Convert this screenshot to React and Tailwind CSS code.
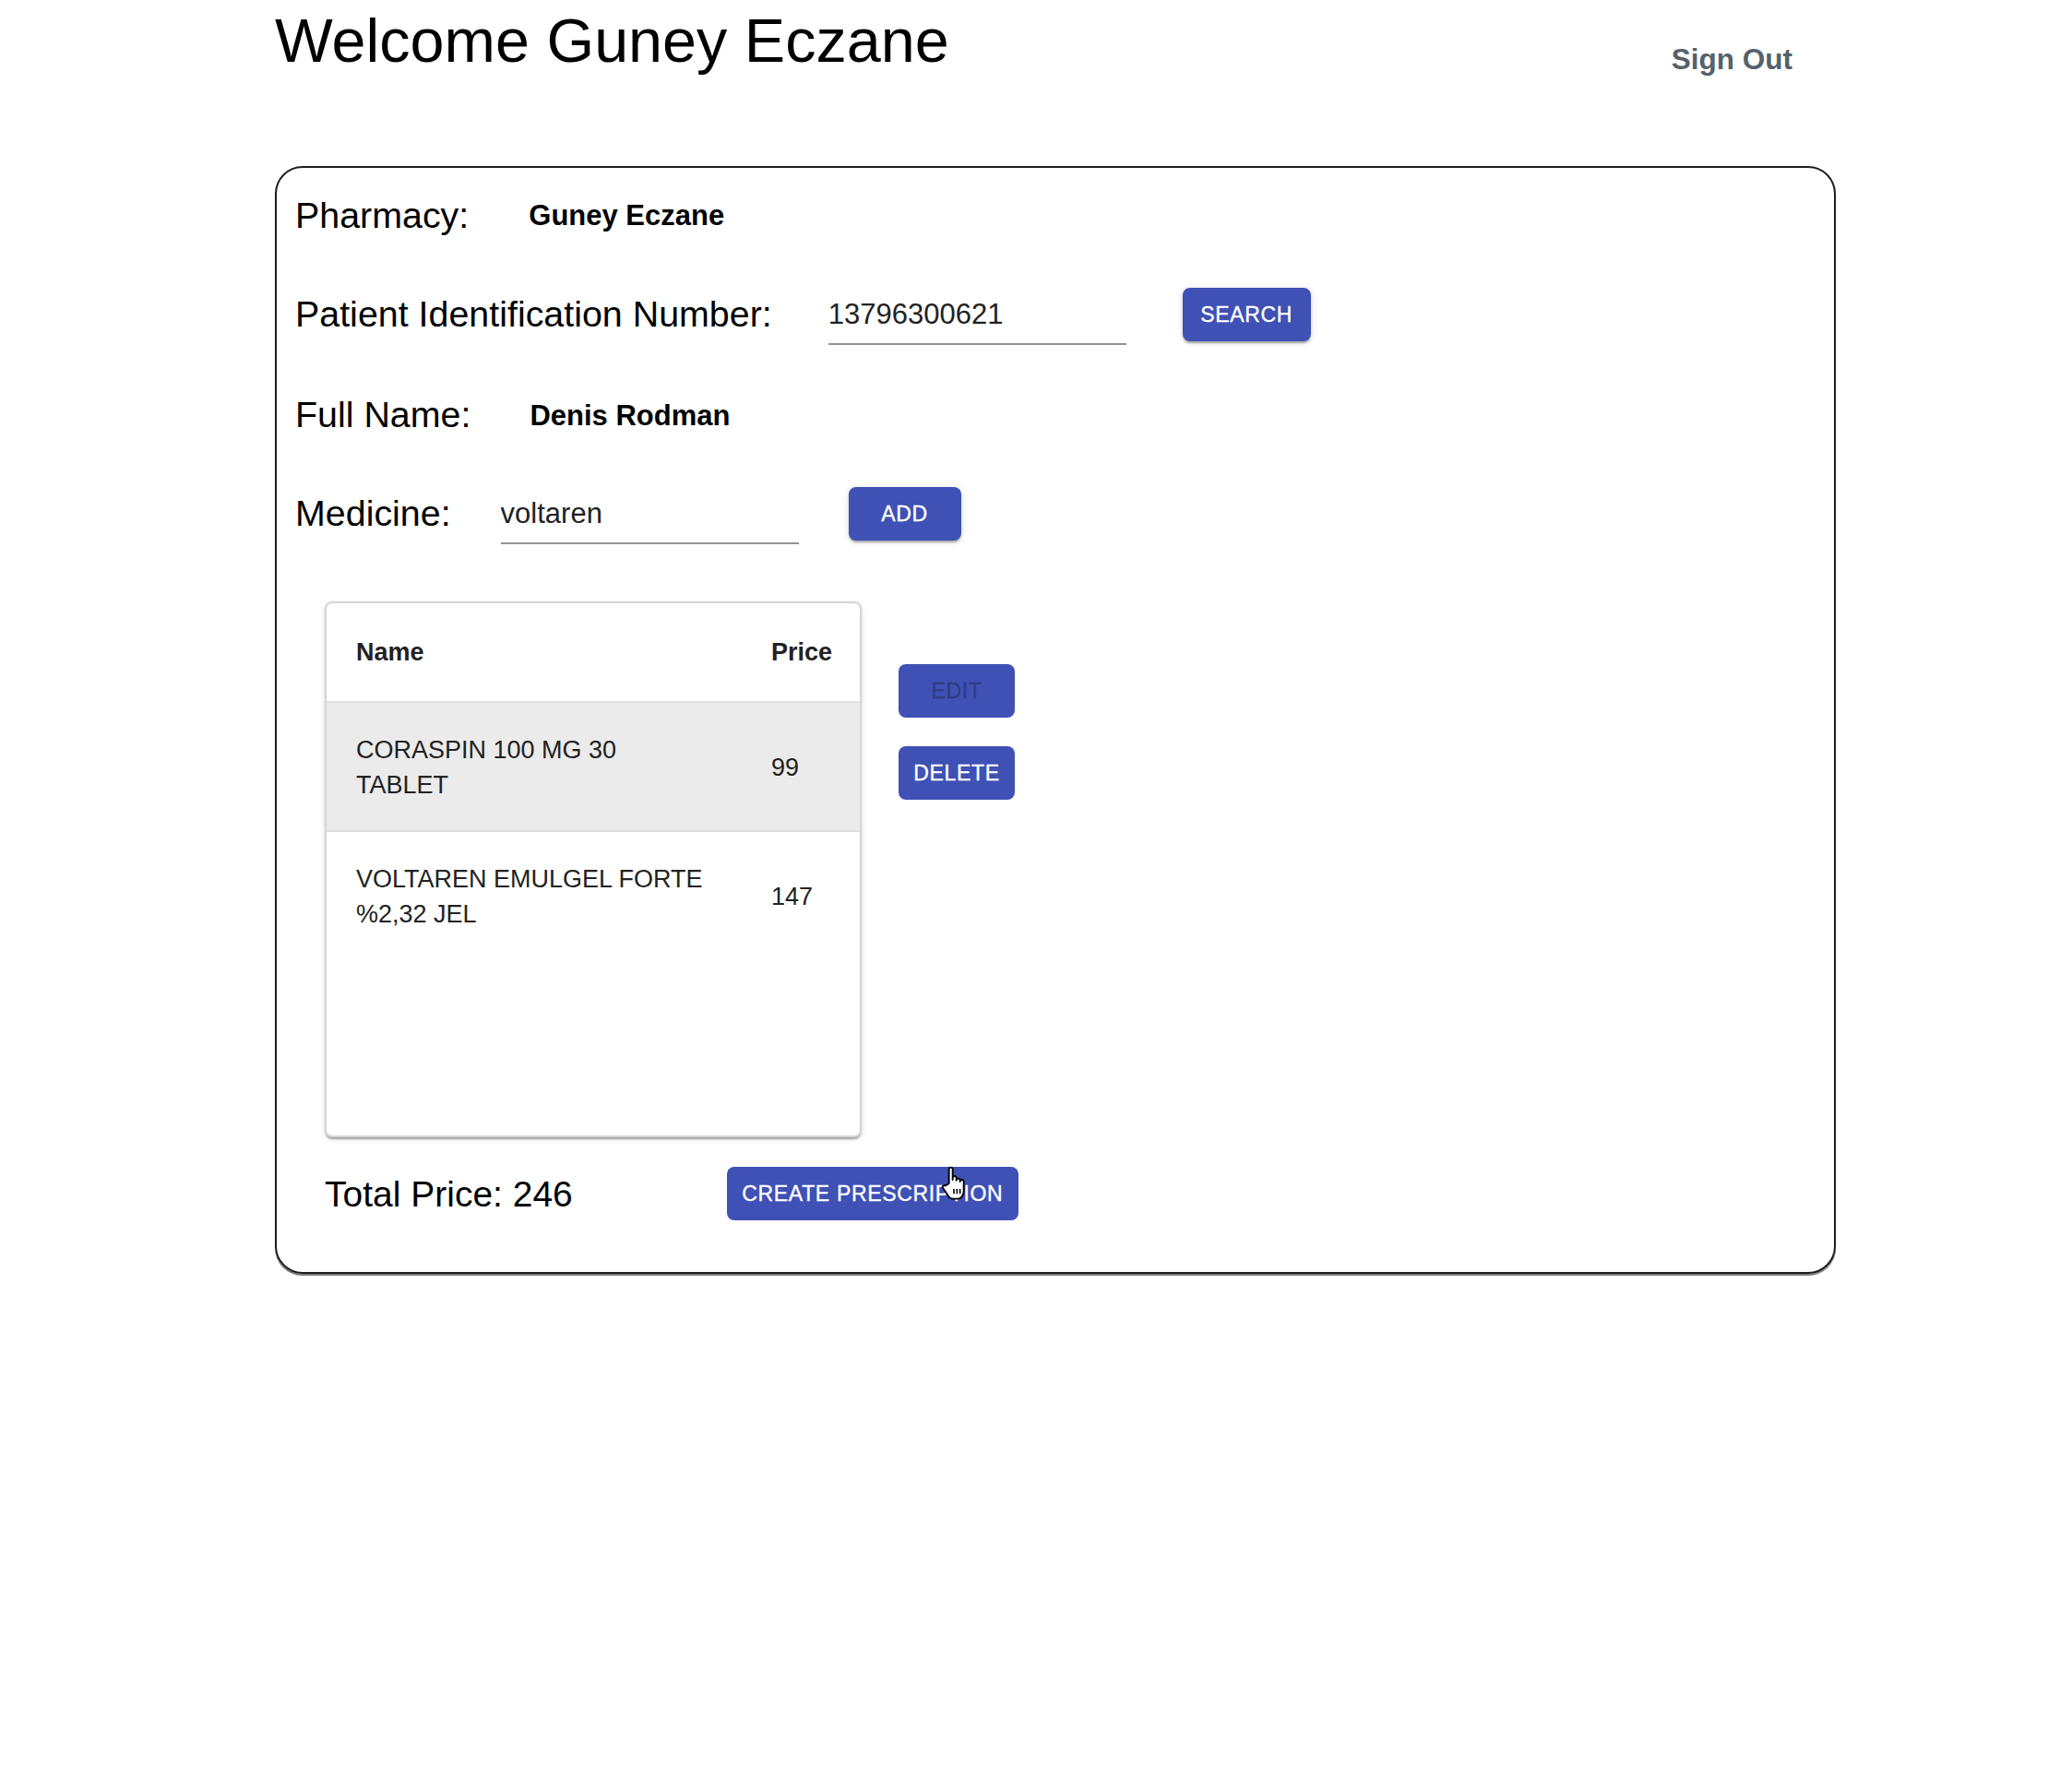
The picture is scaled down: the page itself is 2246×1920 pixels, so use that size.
/**
 * App.jsx
 * Pharmacy prescription screen.
 */

const btn =
  'flex items-center justify-center h-[58px] rounded-[8px] bg-[#3f51b5] text-[23px] font-medium uppercase tracking-[0.02857em] leading-none [-webkit-text-stroke:0.35px_currentColor]';

const raised =
  'shadow-[0_3px_2px_-1px_rgba(0,0,0,0.2),0_2px_3px_0_rgba(0,0,0,0.14),0_1px_8px_0_rgba(0,0,0,0.12)]';

function HandCursor() {
  return (
    <svg
      width="32"
      height="40"
      viewBox="0 0 24 30"
      className="absolute left-[230px] top-[-2px]"
    >
      <path
        d="M8 15V3.5a1.5 1.5 0 0 1 3 0V12V10.5a1.5 1.5 0 0 1 3 0V12.5a1.5 1.5 0 0 1 3 0V13.5a1.5 1.5 0 0 1 3 0V21c0 3.5-2 6.5-5 6.5h-4c-2 0-3-1-4-3l-4-6c-0.8-1.2 0.8-2.6 2-1.6z"
        fill="#fff"
        stroke="#000"
        strokeWidth="1.4"
        strokeLinejoin="round"
      />
      <path d="M12 19.5v4M14.5 19.5v4M17 19.5v4" stroke="#000" strokeWidth="1.2" />
    </svg>
  );
}

export default function App() {
  const rows = [
    { name: 'CORASPIN 100 MG 30 TABLET', price: 99, selected: true },
    { name: 'VOLTAREN EMULGEL FORTE %2,32 JEL', price: 147, selected: false },
  ];

  return (
    <div className="min-h-screen bg-white pl-[298px] font-['Liberation_Sans',Arial,sans-serif] text-black">
      {/* Header */}
      <div className="flex justify-between w-[1692px] h-[180px] pr-[47px]">
        <h1 className="mt-[11px] text-[66.5px] leading-none font-normal">Welcome Guney Eczane</h1>
        <button className="mt-[49px] h-[31px] text-[31.5px] leading-none font-bold text-[#56616b]">
          Sign Out
        </button>
      </div>

      {/* Card */}
      <div className="w-[1692px] h-[1201px] border-2 border-[#1e1e1e] rounded-[30px] shadow-[0_2px_1px_rgba(0,0,0,0.55)] pl-[20px]">
        <div className="flex items-center h-[103px]">
          <span className="text-[39.4px] leading-none">Pharmacy:</span>
          <span className="ml-[65px] text-[31px] leading-none font-bold">Guney Eczane</span>
        </div>

        <div className="flex items-center h-[112px]">
          <span className="text-[39.4px] leading-none">Patient Identification Number:</span>
          <input
            defaultValue="13796300621"
            className="ml-[61px] w-[323px] pt-[15px] pb-[13px] text-[31px] leading-none border-b-2 border-[#949494] outline-none bg-transparent text-[#222]"
          />
          <button className={`${btn} ${raised} ml-[61px] w-[139px] text-white`}>Search</button>
        </div>

        <div className="flex items-center h-[106px]">
          <span className="text-[39.4px] leading-none">Full Name:</span>
          <span className="ml-[64px] text-[31px] leading-none font-bold">Denis Rodman</span>
        </div>

        <div className="flex items-center h-[108px]">
          <span className="text-[39.4px] leading-none">Medicine:</span>
          <input
            defaultValue="voltaren"
            className="ml-[54px] w-[323px] pt-[15px] pb-[13px] text-[31px] leading-none border-b-2 border-[#949494] outline-none bg-transparent text-[#222]"
          />
          <button className={`${btn} ${raised} ml-[54px] w-[122px] text-white`}>Add</button>
        </div>

        {/* Medicine table + actions */}
        <div className="flex mt-[41px] ml-[32px]">
          <div className="w-[582px] h-[581px] border-2 border-[#d6d6d6] rounded-[8px] overflow-hidden bg-white shadow-[0_4px_2px_-2px_rgba(0,0,0,0.2),0_2px_2px_0_rgba(0,0,0,0.14),0_2px_6px_0_rgba(0,0,0,0.12)]">
            <table className="w-full table-fixed border-collapse text-[27px] leading-[38px] text-[#222]">
              <colgroup>
                <col className="w-[450px]" />
                <col />
              </colgroup>
              <thead>
                <tr className="border-b-2 border-[#e0e0e0]">
                  <th className="text-left font-bold pl-[32px] pr-[32px] pt-[34px] pb-[34px]">Name</th>
                  <th className="text-left font-bold pl-[32px] pr-[30px] pt-[34px] pb-[34px]">Price</th>
                </tr>
              </thead>
              <tbody>
                {rows.map(r => (
                  <tr
                    key={r.name}
                    className={r.selected ? 'bg-[#ebebeb] border-b-2 border-[#e0e0e0]' : ''}
                  >
                    <td className="align-middle pl-[32px] pr-[32px] pt-[32px] pb-[30px]">{r.name}</td>
                    <td className="align-middle pl-[32px] pr-[30px] pt-[32px] pb-[30px]">{r.price}</td>
                  </tr>
                ))}
              </tbody>
            </table>
          </div>

          <div className="flex flex-col ml-[40px] pt-[68px] gap-[31px]">
            <button className={`${btn} w-[126px] text-[#2f3c86]`}>Edit</button>
            <button className={`${btn} w-[126px] text-white`}>Delete</button>
          </div>
        </div>

        {/* Total */}
        <div className="flex items-center mt-[32px] ml-[32px] h-[58px]">
          <span className="text-[39px] leading-none">Total Price: 246</span>
          <div className="relative ml-[167px]">
            <button className={`${btn} w-[316px] text-white`}>Create Prescription</button>
            <HandCursor />
          </div>
        </div>
      </div>
    </div>
  );
}
